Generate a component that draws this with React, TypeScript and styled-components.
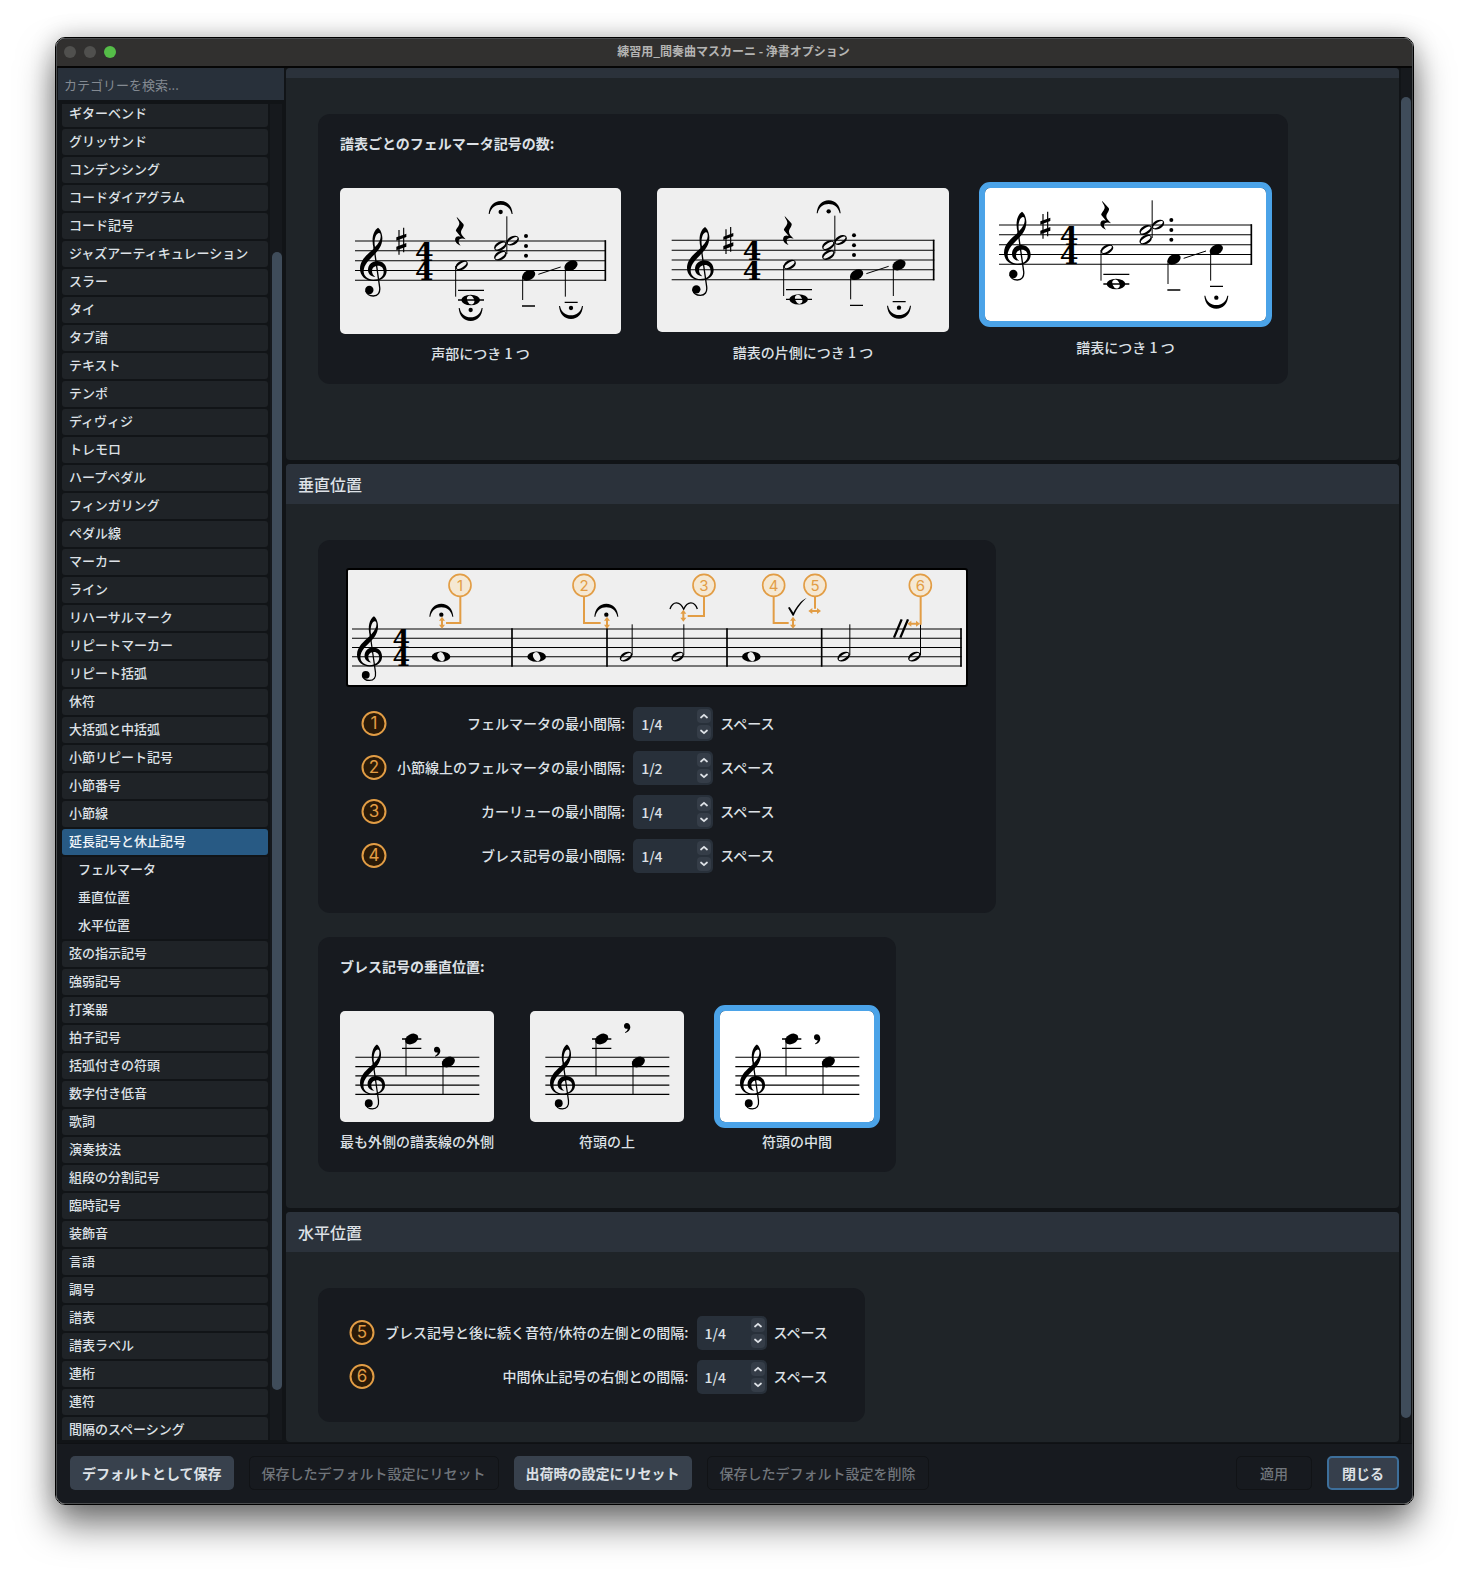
import React, { useState } from 'react';
import styled, { createGlobalStyle } from 'styled-components';

const GlobalStyle = createGlobalStyle`
  * { box-sizing: border-box; }
  body {
    margin: 0;
    background: #fff;
    font-family: "Noto Sans CJK JP", "Noto Sans", sans-serif;
    font-size: 14px;
    font-weight: 500;
    line-height: 20px;
    color: #dde1e6;
  }
  button, input { font: inherit; color: inherit; }
`;

const orange = '#e29d45';

/* ---------- window ---------- */

const Page = styled.div`
  padding: 37px 55px 73px;
`;

const Window = styled.div`
  height: calc(100vh - 110px);
  min-height: 600px;
  border: 1px solid #000;
  border-radius: 10px;
  box-shadow: 0 20px 36px rgba(0, 0, 0, 0.52), 0 0 24px rgba(0, 0, 0, 0.22);
`;

const Frame = styled.div`
  height: 100%;
  display: flex;
  flex-direction: column;
  border: 1px solid #4b4d4f;
  border-radius: 9px;
  background: #111417;
  overflow: hidden;
`;

const TitleBar = styled.header`
  flex: none;
  display: grid;
  grid-template-columns: 80px 1fr 80px;
  align-items: center;
  height: 29px;
  padding: 0 9px 2px 7px;
  background: #31302f;
  border-bottom: 2px solid #060606;
`;

const Lights = styled.div`
  display: flex;
  gap: 8px;
`;

const Light = styled.span<{ $on?: boolean }>`
  width: 12px;
  height: 12px;
  border-radius: 50%;
  background: ${p => (p.$on ? '#55bd48' : '#50504e')};
`;

const Title = styled.h1`
  margin: 0;
  padding-bottom: 1px;
  font-size: 12px;
  font-weight: 700;
  text-align: center;
  color: #b4b4b3;
`;

const Body = styled.div`
  flex: 1;
  min-height: 0;
  display: flex;
  gap: 2px;
  padding: 0 1px;
`;

/* ---------- sidebar ---------- */

const Sidebar = styled.aside`
  flex: none;
  width: 226px;
  display: flex;
  flex-direction: column;
`;

const Search = styled.input`
  flex: none;
  width: 100%;
  height: 32px;
  padding: 0 6px;
  border: 0;
  background: #28303a;
  font-size: 13px;
  font-weight: 400;
  &::placeholder { color: #848a92; opacity: 1; }
`;

const ListArea = styled.div`
  flex: 1;
  min-height: 0;
  display: flex;
  gap: 2px;
  margin: 4px 2px 3px 4px;
`;

const ListClip = styled.nav`
  flex: 1;
  overflow: hidden;
`;

const List = styled.ul`
  margin: -3px 0 0;
  padding: 0;
  list-style: none;
  display: flex;
  flex-direction: column;
  gap: 2px;
`;

const Category = styled.button<{ $active?: boolean }>`
  display: block;
  width: 100%;
  height: 26px;
  padding: 0 7px 2px;
  border: 0;
  border-radius: 3px;
  background: ${p => (p.$active ? '#285a84' : '#1f2327')};
  color: ${p => (p.$active ? '#f1f5f9' : '#dde1e6')};
  font-size: 13px;
  line-height: 24px;
  text-align: left;
`;

const SubList = styled.ul`
  margin: 0;
  padding: 0;
  list-style: none;
  background: #171a1f;
  li:last-child button {
    height: 26px;
    padding-bottom: 2px;
  }
`;

const SubCategory = styled.button`
  display: block;
  width: 100%;
  height: 28px;
  padding: 0 16px 4px;
  border: 0;
  background: none;
  font-size: 13px;
  line-height: 24px;
  text-align: left;
`;

const Track = styled.div<{ $before: number; $thumb: number; $after: number; $inset?: number }>`
  flex: none;
  display: grid;
  grid-template-rows: ${p => `${p.$before}fr ${p.$thumb}fr ${p.$after}fr`};
  width: ${p => 10 + (p.$inset || 0)}px;
  padding-left: ${p => p.$inset || 0}px;
  background: #16191d;
`;

const Thumb = styled.div`
  grid-row: 2;
  border-radius: 5px;
  background: #3f4c5a;
`;

/* ---------- main area ---------- */

const Main = styled.main`
  flex: 1;
  min-width: 0;
  display: flex;
  flex-direction: column;
  gap: 4px;
  margin-bottom: 1px;
  overflow: hidden;
`;

const Section = styled.section<{ $grow?: boolean }>`
  flex: ${p => (p.$grow ? '1 0 auto' : 'none')};
  background: #1f2428;
  border-radius: 4px;
  overflow: hidden;
`;

const ClippedHeader = styled.div`
  height: 10px;
  background: #2b323b;
`;

const SectionTitle = styled.h2`
  margin: 0;
  padding: 0 12px;
  background: #2b323b;
  font-size: 16px;
  font-weight: 500;
  line-height: 40px;
`;

const SectionBody = styled.div<{ $bottom: number }>`
  display: flex;
  flex-direction: column;
  align-items: flex-start;
  gap: 24px;
  padding: 36px 32px ${p => p.$bottom}px;
`;

const panelBox = `
  margin: 0;
  border: 0;
  border-radius: 12px;
  background: #171a1f;
`;

const ChoicePanel = styled.div`
  ${panelBox}
  padding: 19px 22px 12px;
`;

const FieldPanel = styled.div<{ $left: number; $right: number; $bottom: number }>`
  ${panelBox}
  padding: 28px ${p => p.$right}px ${p => p.$bottom}px ${p => p.$left}px;
`;

const PanelLabel = styled.h3`
  margin: 0 0 35px;
  font-size: 14px;
  font-weight: 700;
`;

const Choices = styled.div`
  display: flex;
  gap: 36px;
`;

const Choice = styled.label`
  display: flex;
  flex-direction: column;
`;

const HiddenRadio = styled.input`
  position: absolute;
  opacity: 0;
  width: 1px;
  height: 1px;
  margin: 0;
`;

const Picture = styled.span<{ $on: boolean }>`
  display: block;
  border-radius: 5px;
  background: ${p => (p.$on ? '#fff' : '#efefef')};
  outline: ${p => (p.$on ? '6px solid #4ba3e8' : 'none')};
  svg { display: block; }
`;

const Caption = styled.span`
  flex: 1 0 38px;
  display: flex;
  align-items: center;
  justify-content: center;
`;

const Example = styled.div`
  border: 2px solid #000;
  border-radius: 3px;
  background: #efefef;
  svg { display: block; }
`;

const Fields = styled.div<{ $indent?: boolean }>`
  display: grid;
  grid-template-columns: 26px auto auto auto;
  justify-content: start;
  align-items: center;
  row-gap: 10px;
  ${p => p.$indent && 'margin: 20px 0 0 15px;'}
`;

const FieldLabel = styled.label`
  padding: 0 8px 2px 10px;
  text-align: right;
`;

const Unit = styled.span`
  padding: 0 0 2px 7px;
`;

const Spin = styled.div<{ $w: number }>`
  display: flex;
  align-items: center;
  width: ${p => p.$w}px;
  height: 34px;
  padding: 2px;
  border-radius: 5px;
  background: #28303a;
`;

const SpinInput = styled.input`
  flex: 1;
  min-width: 0;
  height: 30px;
  padding: 0 0 0 6px;
  border: 0;
  background: none;
`;

const Steps = styled.div`
  display: flex;
  flex-direction: column;
  gap: 2px;
`;

const Step = styled.button`
  display: grid;
  place-items: center;
  width: 14px;
  height: 14px;
  padding: 0;
  border: 0;
  border-radius: 4px;
  background: #353d48;
`;

/* ---------- footer ---------- */

const Footer = styled.footer`
  flex: none;
  display: flex;
  gap: 15px;
  height: 60px;
  padding: 12px 13px 0;
  border-top: 1px solid #0f1114;
  background: #171a1f;
`;

const Action = styled.button<{ $primary?: boolean; $wide?: boolean }>`
  height: 34px;
  padding: 0 12px;
  border: 0;
  border-radius: 5px;
  background: #38414d;
  font-weight: 700;
  min-width: 72px;
  ${p => p.$primary && 'border: 2px solid #3d6f9b; background: #363f4c;'}
  ${p => p.$wide && 'min-width: 76px;'}
  &:disabled {
    border: 1px solid #111316;
    background: none;
    color: #70757b;
    font-weight: 500;
  }
`;

const Spacer = styled.div`
  flex: 1;
`;

/* ---------- notation ---------- */

const Clef = ({ x, y, s = 1 }: { x: number; y: number; s?: number }) => (
  <g transform={`translate(${x} ${y}) scale(${s})`}>
    <path
      fillRule="evenodd"
      d="M41 -66 C33 -96 40 -120 54 -129 C62 -124 68 -108 67 -95 C66 -76 57 -63 45 -50 C28 -33 11 -18 11 2 C11 17 24 27 40 27 C60 27 71 17 71 3 C71 -8 64 -15 54 -15 C43 -15 36 -8 36 1 C36 9 40 14 46 19 C34 18 24 10 24 -2 C24 -18 36 -29 52 -29 C68 -29 80 -17 80 0 C80 18 64 31 41 31 C17 31 0 16 0 -6 C0 -32 22 -49 41 -66 Z M45 -71 C56 -82 63 -94 62 -104 C62 -110 60 -114 56 -113 C46 -110 41 -90 45 -71 Z"
    />
    <path d="M42 -70 L59 50 C61 66 54 76 40 76 C30 76 20 71 17 60" fill="none" stroke="#000" strokeWidth="4" />
    <circle cx="28" cy="58" r="12.5" />
  </g>
);

const Staff = ({ x1, x2, y, gap }: { x1: number; x2: number; y: number; gap: number }) => (
  <path d={[0, 1, 2, 3, 4].map(i => `M${x1} ${y + i * gap}H${x2}`).join('')} stroke="#000" strokeWidth="3.2" />
);

const Time = ({ x, y, gap }: { x: number; y: number; gap: number }) => (
  <g fontFamily='"DejaVu Serif", serif' fontWeight="700" fontSize={gap * 2.72} textAnchor="middle">
    <text x={x} y={y + gap * 2}>4</text>
    <text x={x} y={y + gap * 4}>4</text>
  </g>
);

const Half = ({ x, y }: { x: number; y: number }) => (
  <path
    transform={`translate(${x} ${y}) rotate(-28)`}
    fillRule="evenodd"
    d="M-20 0A20 13 0 1 0 20 0A20 13 0 1 0 -20 0ZM-17 1A17 6 -6 1 1 17 -1A17 6 -6 1 1 -17 1Z"
  />
);

const Black = ({ x, y }: { x: number; y: number }) => (
  <ellipse transform={`translate(${x} ${y}) rotate(-28)`} rx="21" ry="14.5" />
);

const Whole = ({ x, y, hole }: { x: number; y: number; hole: string }) => (
  <g transform={`translate(${x} ${y})`}>
    <ellipse rx="28" ry="15.5" />
    <ellipse rx="14" ry="10" transform="rotate(65)" fill={hole} />
  </g>
);

const Fermata = ({ x, y, flip }: { x: number; y: number; flip?: boolean }) => (
  <g transform={`translate(${x} ${y}) scale(1 ${flip ? -1 : 1})`}>
    <path d="M-36 6 C-34 -18 -20 -33 0 -33 C20 -33 34 -18 36 6 L33 6 C29 -13 16 -22 0 -22 C-16 -22 -29 -13 -33 6 Z" />
    <circle r="6.5" />
  </g>
);

type ChordProps = {
  view: string; w: number; h: number;
  dx: number; dy: number; left: number; right: number;
  clef: number; sharp: number; time: number;
  top?: boolean; low?: boolean; last: number; paper?: string;
};

const ChordScore = (p: ChordProps) => (
  <svg width={p.w} height={p.h} viewBox={p.view} aria-hidden="true">
    <Staff x1={p.left} x2={p.right} y={423 + p.dy} gap={29.5} />
    <path d={`M${p.right - 2} ${421 + p.dy}V${543 + p.dy}`} stroke="#000" strokeWidth="5" />
    <Clef x={p.clef} y={512 + p.dy} />
    <g transform={`translate(${p.sharp} ${p.dy})`}>
      <path d="M8 390V464M22 383V457" stroke="#000" strokeWidth="3.5" />
      <path d="M0 412L30 401V411L0 422ZM0 440L30 429V440L0 451Z" />
    </g>
    <Time x={p.time} y={423 + p.dy} gap={29.5} />
    <g transform={`translate(${p.dx} ${p.dy})`}>
      <path d="M440 350L460 372C465 379 453 388 453 397C453 404 459 410 467 418C458 414 446 415 446 424C446 430 449 434 452 437C440 433 433 423 436 415C438 408 446 407 452 410L438 393C436 388 449 378 448 369C447 361 440 356 440 350Z" />
      <Half x={455} y={496} />
      <Half x={571} y={438} />
      <Half x={571} y={467} />
      <Half x={608} y={422} />
      <path d="M437 498V590M590.5 349V462M638 530V600M766 500V590" stroke="#000" strokeWidth="3" />
      <circle cx="648" cy="408" r="6" />
      <circle cx="648" cy="438" r="6" />
      <circle cx="648" cy="467" r="6" />
      <Whole x={482} y={600} hole={p.paper || '#efefef'} />
      <path d="M444 571H522M444 600H522M636 618H675M764 607H803" stroke="#000" strokeWidth="4" />
      <path d="M685 523L752 501" stroke="#000" strokeWidth="3" />
      <Black x={656} y={526} />
      <Black x={783} y={497} />
      {p.top && <Fermata x={572} y={336} />}
      {p.low && <Fermata x={482} y={630} flip />}
      <Fermata x={783} y={p.last} flip />
    </g>
  </svg>
);

const BreathScore = ({ y }: { y: number }) => (
  <svg width="154" height="111" viewBox="0 0 462 333" aria-hidden="true">
    <Staff x1={46} x2={418} y={139} gap={27.8} />
    <Clef x={60} y={222} s={0.94} />
    <path d="M186 84H244M186 112H244" stroke="#000" strokeWidth="4" />
    <path d="M198 84V195M309 156V250" stroke="#000" strokeWidth="3" />
    <Black x={215} y={84} />
    <Black x={325} y={153} />
    <path
      transform={`translate(291 ${y})`}
      d="M-1 -14C6 -14 10 -8 10 -1C10 7 4 13 -5 16L-6 14C-1 11 2 7 2 3C-4 5 -9 1 -9 -5C-9 -10 -6 -14 -1 -14Z"
    />
  </svg>
);

const Badge = ({ n, x, y }: { n: number; x: number; y: number }) => (
  <g>
    <circle cx={x} cy={y} r="33" fill="#f5e8d3" stroke={orange} strokeWidth="5" />
    <text
      x={x} y={y + 16} textAnchor="middle" fill={orange}
      fontFamily='Inter, "Liberation Sans", sans-serif' fontSize="45" fontWeight="400"
    >{n}</text>
  </g>
);

const VArrow = ({ x, y }: { x: number; y: number }) => (
  <path fill={orange} d={`M${x} ${y - 18}l9 12h-6v12h6l-9 12l-9 -12h6v-12h-6z`} />
);

const HArrow = ({ x, y }: { x: number; y: number }) => (
  <path fill={orange} d={`M${x - 19} ${y}l12 -9v6h14v-6l12 9l-12 9v-6h-14v6z`} />
);

const PositionScore = () => (
  <svg width="618" height="115" viewBox="114 120 1854 345" aria-hidden="true">
    <Staff x1={126} x2={1955} y={297} gap={27.75} />
    <path d="M606 295V410M891 295V410M1251 295V410M1535 295V410M1953 295V410" stroke="#000" strokeWidth="5" />
    <Clef x={141} y={380} s={0.94} />
    <Time x={274} y={297} gap={27.75} />
    {[393, 680, 1324].map(x => <Whole key={x} x={x} y={380} hole="#efefef" />)}
    {[948, 1103, 1601, 1813].map(x => (
      <g key={x}>
        <Half x={x} y={380} />
        <path d={`M${x + 18.5} 283V376`} stroke="#000" strokeWidth="3" />
      </g>
    ))}
    <Fermata x={394} y={254} />
    <Fermata x={889} y={254} />
    <path d="M1080 237C1088 213 1110 212 1121 238C1132 212 1154 213 1162 237" fill="none" stroke="#000" strokeWidth="4" />
    <path d="M1434 233L1439 231L1450 248C1460 229 1474 210 1490 204C1476 215 1461 235 1451 257H1448Z" />
    <path d="M1752 323L1775 268M1771 323L1794 268" stroke="#000" strokeWidth="7" />
    <path
      d="M451 199V279H408M822 199V279H872M1182 199V258H1133M1391 199V279H1436M1515 199V236M1832 199V284"
      fill="none" stroke={orange} strokeWidth="6"
    />
    <VArrow x={396} y={278} />
    <VArrow x={891} y={278} />
    <VArrow x={1120} y={257} />
    <VArrow x={1449} y={278} />
    <HArrow x={1514} y={243} />
    <HArrow x={1811} y={281} />
    {[450, 822, 1182, 1391, 1515, 1831].map((x, i) => <Badge key={x} n={i + 1} x={x} y={166} />)}
  </svg>
);

const Marker = ({ n }: { n: number }) => (
  <svg width="26" height="26" viewBox="0 0 26 26" aria-hidden="true">
    <circle cx="13" cy="12.5" r="11.5" fill="#2a1a08" stroke={orange} strokeWidth="2" />
    <text
      x="13" y="18" textAnchor="middle" fill={orange}
      fontFamily='Inter, "Liberation Sans", sans-serif' fontSize="17" fontWeight="400"
    >{n}</text>
  </svg>
);

const Chevron = ({ up }: { up?: boolean }) => (
  <svg width="8" height="6" viewBox="0 0 8 6" aria-hidden="true">
    <path d={up ? 'M1 4.5L4 1.8L7 4.5' : 'M1 1.5L4 4.2L7 1.5'} fill="none" stroke="#dde1e6" strokeWidth="1.7" strokeLinecap="round" />
  </svg>
);

/* ---------- data ---------- */

const before = [
  'ギターベンド', 'グリッサンド', 'コンデンシング', 'コードダイアグラム', 'コード記号',
  'ジャズアーティキュレーション', 'スラー', 'タイ', 'タブ譜', 'テキスト', 'テンポ', 'ディヴィジ',
  'トレモロ', 'ハープペダル', 'フィンガリング', 'ペダル線', 'マーカー', 'ライン', 'リハーサルマーク',
  'リピートマーカー', 'リピート括弧', '休符', '大括弧と中括弧', '小節リピート記号', '小節番号', '小節線',
];
const after = [
  '弦の指示記号', '強弱記号', '打楽器', '拍子記号', '括弧付きの符頭', '数字付き低音', '歌詞', '演奏技法',
  '組段の分割記号', '臨時記号', '装飾音', '言語', '調号', '譜表', '譜表ラベル', '連桁', '連符',
  '間隔のスペーシング',
];

type Opt = { label: string; art: React.ReactNode };

const fermataOptions: Opt[] = [
  {
    label: '声部につき 1 つ',
    art: <ChordScore w={281} h={146} view="90 264 843 438" dx={0} dy={0} left={135} right={888}
      clef={150} sharp={259} time={343} top low last={624} />,
  },
  {
    label: '譜表の片側につき 1 つ',
    art: <ChordScore w={292} h={144} view="51 264 876 432" dx={-6} dy={-2} left={95} right={883}
      clef={141} sharp={250} time={336} top last={625} />,
  },
  {
    label: '譜表につき 1 つ',
    art: <ChordScore w={281} h={133} view="75 264 843 399" dx={-14} dy={-48} left={117} right={876}
      clef={132} sharp={241} time={327} last={641} paper="#fff" />,
  },
];

const breathOptions: Opt[] = [
  { label: '最も外側の譜表線の外側', art: <BreathScore y={121} /> },
  { label: '符頭の上', art: <BreathScore y={50} /> },
  { label: '符頭の中間', art: <BreathScore y={84} /> },
];

const ChoiceGroup = ({ name, title, options }: { name: string; title: string; options: Opt[] }) => {
  const [value, setValue] = useState(2);
  return (
    <ChoicePanel role="radiogroup" aria-labelledby={`${name}-title`}>
      <PanelLabel id={`${name}-title`}>{title}</PanelLabel>
      <Choices>
        {options.map((o, i) => (
          <Choice key={o.label}>
            <HiddenRadio type="radio" name={name} checked={value === i} onChange={() => setValue(i)} />
            <Picture $on={value === i}>{o.art}</Picture>
            <Caption>{o.label}</Caption>
          </Choice>
        ))}
      </Choices>
    </ChoicePanel>
  );
};

const Field = ({ n, label, value, w }: { n: number; label: string; value: string; w: number }) => (
  <>
    <Marker n={n} />
    <FieldLabel htmlFor={`gap-${n}`}>{label}</FieldLabel>
    <Spin $w={w}>
      <SpinInput id={`gap-${n}`} type="text" defaultValue={value} />
      <Steps>
        <Step type="button" aria-label="増やす"><Chevron up /></Step>
        <Step type="button" aria-label="減らす"><Chevron /></Step>
      </Steps>
    </Spin>
    <Unit>スペース</Unit>
  </>
);

export default function App() {
  return (
    <Page>
      <GlobalStyle />
      <Window>
        <Frame>
          <TitleBar>
            <Lights><Light /><Light /><Light $on /></Lights>
            <Title>練習用_間奏曲マスカーニ - 浄書オプション</Title>
          </TitleBar>
          <Body>
            <Sidebar>
              <Search type="text" aria-label="カテゴリーを検索" placeholder="カテゴリーを検索..." />
              <ListArea>
                <ListClip>
                  <List>
                    {before.map(c => <li key={c}><Category type="button">{c}</Category></li>)}
                    <li><Category type="button" $active>延長記号と休止記号</Category></li>
                    <li>
                      <SubList>
                        {['フェルマータ', '垂直位置', '水平位置'].map(c => (
                          <li key={c}><SubCategory type="button">{c}</SubCategory></li>
                        ))}
                      </SubList>
                    </li>
                    {after.map(c => <li key={c}><Category type="button">{c}</Category></li>)}
                  </List>
                </ListClip>
                <Track $before={148} $thumb={1138} $after={50} $inset={2}><Thumb /></Track>
              </ListArea>
            </Sidebar>
            <Main>
              <Section>
                <ClippedHeader />
                <SectionBody $bottom={76}>
                  <ChoiceGroup name="fermata" title="譜表ごとのフェルマータ記号の数:" options={fermataOptions} />
                </SectionBody>
              </Section>
              <Section>
                <SectionTitle>垂直位置</SectionTitle>
                <SectionBody $bottom={36}>
                  <FieldPanel $left={28} $right={28} $bottom={40}>
                    <Example><PositionScore /></Example>
                    <Fields $indent>
                      <Field n={1} label="フェルマータの最小間隔:" value="1/4" w={80} />
                      <Field n={2} label="小節線上のフェルマータの最小間隔:" value="1/2" w={80} />
                      <Field n={3} label="カーリューの最小間隔:" value="1/4" w={80} />
                      <Field n={4} label="ブレス記号の最小間隔:" value="1/4" w={80} />
                    </Fields>
                  </FieldPanel>
                  <ChoiceGroup name="breath" title="ブレス記号の垂直位置:" options={breathOptions} />
                </SectionBody>
              </Section>
              <Section $grow>
                <SectionTitle>水平位置</SectionTitle>
                <SectionBody $bottom={20}>
                  <FieldPanel $left={31} $right={37} $bottom={28}>
                    <Fields>
                      <Field n={5} label="ブレス記号と後に続く音符/休符の左側との間隔:" value="1/4" w={70} />
                      <Field n={6} label="中間休止記号の右側との間隔:" value="1/4" w={70} />
                    </Fields>
                  </FieldPanel>
                </SectionBody>
              </Section>
            </Main>
            <Track $before={29} $thumb={1320} $after={25}><Thumb /></Track>
          </Body>
          <Footer>
            <Action type="button">デフォルトとして保存</Action>
            <Action type="button" disabled>保存したデフォルト設定にリセット</Action>
            <Action type="button">出荷時の設定にリセット</Action>
            <Action type="button" disabled>保存したデフォルト設定を削除</Action>
            <Spacer />
            <Action type="button" disabled $wide>適用</Action>
            <Action type="button" $primary>閉じる</Action>
          </Footer>
        </Frame>
      </Window>
    </Page>
  );
}
